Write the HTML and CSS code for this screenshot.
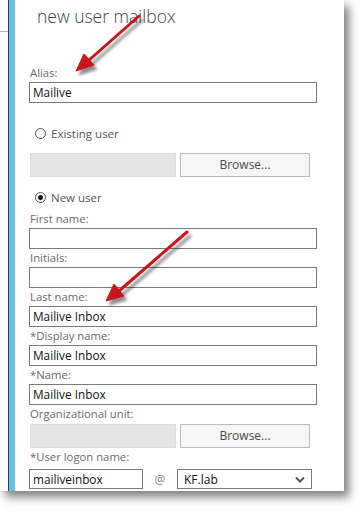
FILE: index.html
```html
<!DOCTYPE html>
<html>
<head>
<meta charset="utf-8">
<link rel="stylesheet" href="styles.css">
</head>
<body>
<div class="window">
  <div class="strip"></div>
  <div class="accent"></div>
  <div class="panel">
    <h1 class="title">new user mailbox</h1>
    <div class="field alias">
      <div class="label">Alias:</div>
      <div class="input">Mailive</div>
    </div>
    <div class="radio-row first-radio"><span class="radio"></span><span class="radio-text">Existing user</span></div>
    <div class="browse-row browse-user">
      <div class="disabled-box"></div>
      <div class="button">Browse...</div>
    </div>
    <div class="radio-row second-radio"><span class="radio checked"></span><span class="radio-text">New user</span></div>
    <div class="field first-name">
      <div class="label">First name:</div>
      <div class="input"></div>
    </div>
    <div class="field">
      <div class="label">Initials:</div>
      <div class="input"></div>
    </div>
    <div class="field">
      <div class="label">Last name:</div>
      <div class="input">Mailive Inbox</div>
    </div>
    <div class="field">
      <div class="label">*Display name:</div>
      <div class="input">Mailive Inbox</div>
    </div>
    <div class="field">
      <div class="label">*Name:</div>
      <div class="input">Mailive Inbox</div>
    </div>
    <div class="label">Organizational unit:</div>
    <div class="browse-row browse-ou">
      <div class="disabled-box"></div>
      <div class="button">Browse...</div>
    </div>
    <div class="label">*User logon name:</div>
    <div class="logon-row">
      <div class="input logon">mailiveinbox</div>
      <span class="at">@</span>
      <div class="select"><span>KF.lab</span>
        <svg class="chev" width="10" height="7" viewBox="0 0 10 7"><path d="M1 1.5 L5 5.5 L9 1.5" fill="none" stroke="#555" stroke-width="2"/></svg>
      </div>
    </div>
    <div class="label">*New password:</div>
  </div>
  <svg class="arrows" width="344" height="491" viewBox="0 0 344 491">
    <defs>
      <filter id="sh" x="-20%" y="-20%" width="140%" height="140%">
        <feGaussianBlur in="SourceAlpha" stdDeviation="1.6"/>
        <feOffset dx="3" dy="4" result="b"/>
        <feComponentTransfer><feFuncA type="linear" slope="0.45"/></feComponentTransfer>
        <feMerge><feMergeNode/><feMergeNode in="SourceGraphic"/></feMerge>
      </filter>
    </defs>
    <g filter="url(#sh)" fill="#c8141a" stroke="#c8141a">
      <line x1="139" y1="16" x2="88" y2="61" stroke-width="3" stroke-linecap="round"/>
      <polygon points="76,71 84,54 94,65" stroke-width="1" stroke-linejoin="round"/>
      <line x1="187" y1="232" x2="119" y2="291" stroke-width="3" stroke-linecap="round"/>
      <polygon points="106,301 114,284 124,296" stroke-width="1" stroke-linejoin="round"/>
    </g>
  </svg>
</div>
</body>
</html>
```
FILE: styles.css
```css
html, body {
  margin: 0;
  padding: 0;
  background: #ffffff;
}
body {
  font-family: "Open Sans", "Noto Sans", sans-serif;
  width: 361px;
  height: 515px;
  overflow: hidden;
}
.window {
  position: relative;
  width: 344px;
  height: 491px;
  display: flex;
  overflow: hidden;
  background: #fff;
  box-shadow: 5px 6px 9px rgba(0, 0, 0, 0.5);
}
.strip {
  width: 8px;
  flex: none;
  border-right: 1px solid #3c3c3c;
  background: linear-gradient(#fff 0, #fff 31px, #b5b5b5 31px, #b5b5b5 32px, #fff 32px);
}
.accent {
  width: 6px;
  flex: none;
  background: #63c3ea;
}
.panel {
  flex: 1;
  padding-left: 14px;
  background: #fff;
}
.title {
  margin: 0;
  padding: 4px 0 0 8px;
  height: 60px;
  box-sizing: border-box;
  font-weight: 300;
  font-size: 17.5px;
  line-height: 24px;
  color: #444;
  letter-spacing: 0;
}
.label {
  font-size: 11.3px;
  line-height: 18px;
  height: 18px;
  color: #6a6a6a;
  padding-left: 1px;
  white-space: nowrap;
}
.alias .label {
  margin-top: 4px;
}
.input {
  box-sizing: border-box;
  width: 288px;
  height: 21px;
  border: 1px solid #7a7a7a;
  font-size: 11.8px;
  line-height: 19px;
  padding-left: 3px;
  color: #111;
  background: #fff;
}
.radio-row {
  display: flex;
  align-items: center;
  height: 18px;
  padding-left: 6px;
}
.first-radio { margin-top: 21px; }
.second-radio { margin-top: 11px; }
.radio {
  box-sizing: border-box;
  width: 11px;
  height: 11px;
  border: 1px solid #555;
  border-radius: 50%;
  background: #fff;
  display: flex;
  align-items: center;
  justify-content: center;
}
.radio.checked::after {
  content: "";
  width: 5px;
  height: 5px;
  border-radius: 50%;
  background: #111;
}
.radio-text {
  margin-left: 5px;
  font-size: 11.5px;
  color: #555;
}
.browse-row {
  display: flex;
  gap: 4px;
  height: 24px;
  padding-left: 1px;
}
.browse-user { margin-top: 11px; }
.browse-ou { margin-top: 1px; margin-bottom: 0; }
.disabled-box {
  width: 146px;
  height: 24px;
  box-sizing: border-box;
  background: #e5e5e5;
  border: 1px solid #dedede;
}
.button {
  box-sizing: border-box;
  width: 130px;
  height: 24px;
  border: 1px solid #bcbcbc;
  background: #f6f6f6;
  color: #4a4a4a;
  font-size: 12px;
  line-height: 22px;
  text-align: center;
}
.first-name {
  margin-top: 4px;
}
.logon-row {
  display: flex;
  align-items: center;
  margin-top: 3px;
  height: 20px;
}
.input.logon {
  width: 114px;
  height: 20px;
  line-height: 18px;
}
.at {
  width: 34px;
  text-align: center;
  font-size: 12px;
  color: #8a8a8a;
}
.select {
  box-sizing: border-box;
  width: 135px;
  height: 20px;
  border: 1px solid #7a7a7a;
  display: flex;
  align-items: center;
  justify-content: space-between;
  padding: 0 6px 0 6px;
  font-size: 12px;
  color: #111;
}
.chev {
  display: block;
}
.logon-row + .label {
  margin-top: -1px;
}
.arrows {
  position: absolute;
  left: 0;
  top: 0;
  pointer-events: none;
}
```
